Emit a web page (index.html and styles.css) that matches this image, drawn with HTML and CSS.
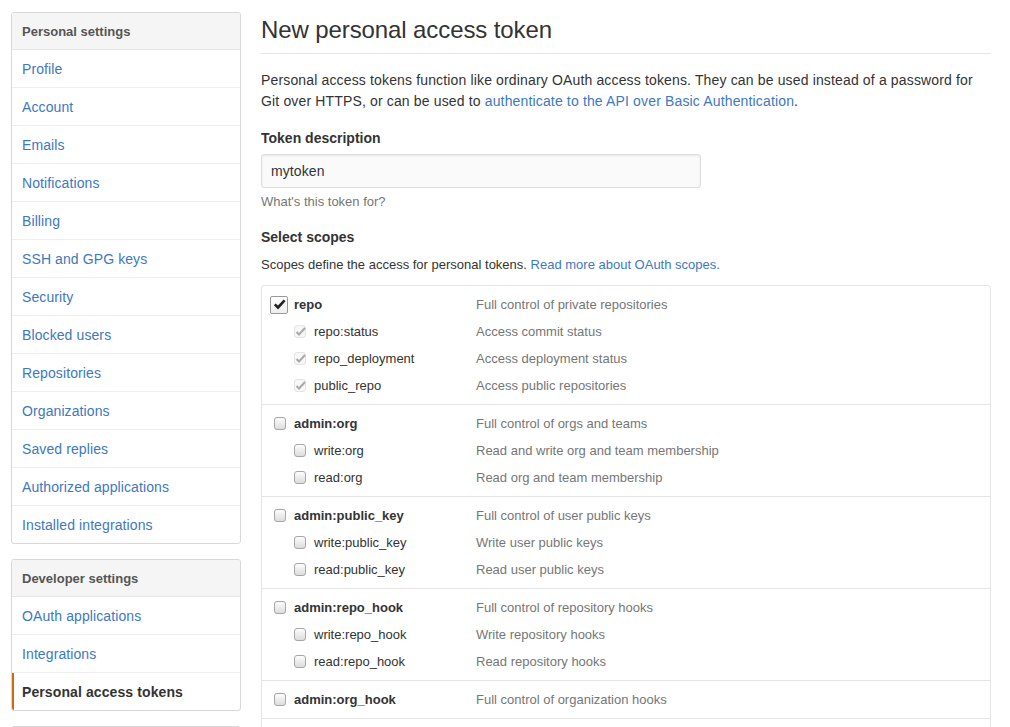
FILE: index.html
```html
<!DOCTYPE html>
<html>
<head>
<meta charset="utf-8">
<link rel="stylesheet" href="styles.css">
</head>
<body>
<div class="container">
  <aside class="sidebar">
    <nav class="menu">
      <div class="menu-heading">Personal settings</div>
      <a class="menu-item" href="#">Profile</a>
      <a class="menu-item" href="#">Account</a>
      <a class="menu-item" href="#">Emails</a>
      <a class="menu-item" href="#">Notifications</a>
      <a class="menu-item" href="#">Billing</a>
      <a class="menu-item" href="#">SSH and GPG keys</a>
      <a class="menu-item" href="#">Security</a>
      <a class="menu-item" href="#">Blocked users</a>
      <a class="menu-item" href="#">Repositories</a>
      <a class="menu-item" href="#">Organizations</a>
      <a class="menu-item" href="#">Saved replies</a>
      <a class="menu-item" href="#">Authorized applications</a>
      <a class="menu-item" href="#">Installed integrations</a>
    </nav>
    <nav class="menu">
      <div class="menu-heading">Developer settings</div>
      <a class="menu-item" href="#">OAuth applications</a>
      <a class="menu-item" href="#">Integrations</a>
      <a class="menu-item selected" href="#">Personal access tokens</a>
    </nav>
    <nav class="menu">
      <div class="menu-heading">&nbsp;</div>
    </nav>
  </aside>
  <main class="main">
    <h2 class="title">New personal access token</h2>
    <p class="intro">Personal access tokens function like ordinary OAuth access tokens. They can be used instead of a password for Git over HTTPS, or can be used to <a href="#">authenticate to the API over Basic Authentication</a>.</p>
    <div class="form-group">
      <label class="label">Token description</label>
      <div class="input">mytoken</div>
      <p class="note">What's this token for?</p>
    </div>
    <div class="form-group form-group-last">
      <label class="label">Select scopes</label>
      <p class="scopes-desc">Scopes define the access for personal tokens. <a href="#">Read more about OAuth scopes.</a></p>
    </div>
    <div class="scopes">
      <div class="scope-group">
        <div class="scope-row">
          <div class="scope-name top"><span class="cb cb-checked"><svg width="15" height="15" viewBox="0 0 15 15"><path d="M2.8 7.3 L6 10.5 L12.6 3.3" fill="none" stroke="#222" stroke-width="2.6"/></svg></span><b>repo</b></div>
          <div class="scope-desc">Full control of private repositories</div>
        </div>
        <div class="scope-row">
          <div class="scope-name sub"><span class="cb cb-dis"><svg width="13" height="12" viewBox="0 0 13 12"><path d="M2.5 6 L5 8.5 L11 2" fill="none" stroke="#a9a9a9" stroke-width="2"/></svg></span>repo:status</div>
          <div class="scope-desc">Access commit status</div>
        </div>
        <div class="scope-row">
          <div class="scope-name sub"><span class="cb cb-dis"><svg width="13" height="12" viewBox="0 0 13 12"><path d="M2.5 6 L5 8.5 L11 2" fill="none" stroke="#a9a9a9" stroke-width="2"/></svg></span>repo_deployment</div>
          <div class="scope-desc">Access deployment status</div>
        </div>
        <div class="scope-row">
          <div class="scope-name sub"><span class="cb cb-dis"><svg width="13" height="12" viewBox="0 0 13 12"><path d="M2.5 6 L5 8.5 L11 2" fill="none" stroke="#a9a9a9" stroke-width="2"/></svg></span>public_repo</div>
          <div class="scope-desc">Access public repositories</div>
        </div>
      </div>
      <div class="scope-group">
        <div class="scope-row">
          <div class="scope-name top"><span class="cb"></span><b>admin:org</b></div>
          <div class="scope-desc">Full control of orgs and teams</div>
        </div>
        <div class="scope-row">
          <div class="scope-name sub"><span class="cb"></span>write:org</div>
          <div class="scope-desc">Read and write org and team membership</div>
        </div>
        <div class="scope-row">
          <div class="scope-name sub"><span class="cb"></span>read:org</div>
          <div class="scope-desc">Read org and team membership</div>
        </div>
      </div>
      <div class="scope-group">
        <div class="scope-row">
          <div class="scope-name top"><span class="cb"></span><b>admin:public_key</b></div>
          <div class="scope-desc">Full control of user public keys</div>
        </div>
        <div class="scope-row">
          <div class="scope-name sub"><span class="cb"></span>write:public_key</div>
          <div class="scope-desc">Write user public keys</div>
        </div>
        <div class="scope-row">
          <div class="scope-name sub"><span class="cb"></span>read:public_key</div>
          <div class="scope-desc">Read user public keys</div>
        </div>
      </div>
      <div class="scope-group">
        <div class="scope-row">
          <div class="scope-name top"><span class="cb"></span><b>admin:repo_hook</b></div>
          <div class="scope-desc">Full control of repository hooks</div>
        </div>
        <div class="scope-row">
          <div class="scope-name sub"><span class="cb"></span>write:repo_hook</div>
          <div class="scope-desc">Write repository hooks</div>
        </div>
        <div class="scope-row">
          <div class="scope-name sub"><span class="cb"></span>read:repo_hook</div>
          <div class="scope-desc">Read repository hooks</div>
        </div>
      </div>
      <div class="scope-group">
        <div class="scope-row">
          <div class="scope-name top"><span class="cb"></span><b>admin:org_hook</b></div>
          <div class="scope-desc">Full control of organization hooks</div>
        </div>
      </div>
      <div class="scope-group">
        <div class="scope-row">
          <div class="scope-name top"><span class="cb"></span><b>gist</b></div>
          <div class="scope-desc">Create gists</div>
        </div>
      </div>
    </div>
  </main>
</div>
</body>
</html>
```
FILE: styles.css
```css
html, body {
  margin: 0;
  padding: 0;
  background: #fff;
  font-family: "Liberation Sans", Arial, sans-serif;
  font-size: 14px;
  line-height: 1.5;
  color: #333;
  overflow: hidden;
}
a { color: #4078c0; text-decoration: none; }

.container {
  display: flex;
  gap: 20px;
  padding: 12px 0 0 11px;
  width: 980px;
}

.sidebar {
  width: 230px;
  flex: none;
  display: flex;
  flex-direction: column;
  gap: 15px;
}
.menu {
  border: 1px solid #d8d8d8;
  border-radius: 3px;
  display: flex;
  flex-direction: column;
  overflow: hidden;
}
.menu-heading {
  background: #f5f5f5;
  border-bottom: 1px solid #e5e5e5;
  padding: 9px 10px 7px;
  font-size: 13px;
  line-height: 20px;
  font-weight: bold;
  color: #555;
}
.menu-item {
  display: block;
  padding: 9px 10px 7px;
  line-height: 21px;
  letter-spacing: 0.1px;
  border-bottom: 1px solid #eee;
}
.menu-item:last-child { border-bottom: 0; }
.menu-item.selected {
  color: #333;
  font-weight: bold;
  border-left: 2px solid #d26911;
  padding-left: 8px;
}

.main {
  width: 730px;
  flex: none;
}
.title {
  margin: 3px 0 0;
  padding-bottom: 8px;
  font-size: 24px;
  line-height: 30px;
  font-weight: normal;
  letter-spacing: -0.1px;
  border-bottom: 1px solid #e5e5e5;
}
.intro {
  margin: 16px 0 16px;
  line-height: 21px;
  letter-spacing: 0.15px;
}
.form-group { margin-bottom: 16px; }
.form-group-last { margin-bottom: 10px; }
.label {
  display: block;
  font-weight: bold;
  line-height: 21px;
}
.input {
  margin-top: 5px;
  height: 32px;
  box-sizing: content-box;
  border: 1px solid #ddd;
  border-radius: 3px;
  background: #fafafa;
  box-shadow: inset 0 1px 2px rgba(0,0,0,0.075);
  padding: 0 0 0 9px;
  width: 429px;
  line-height: 32px;
  font-size: 14px;
  letter-spacing: 0.1px;
}
.note {
  margin: 5px 0 0;
  font-size: 13px;
  line-height: 18px;
  color: #767676;
}
.scopes-desc {
  margin: 6px 0 0;
  font-size: 13px;
  line-height: 21px;
}

.scopes {
  border: 1px solid #e5e5e5;
  border-radius: 3px;
  font-size: 13px;
}
.scope-group {
  padding: 5px 9px 5px;
  border-bottom: 1px solid #e5e5e5;
}
.scope-row {
  display: flex;
  align-items: center;
  height: 27px;
}
.scope-name {
  width: 205px;
  flex: none;
  display: flex;
  align-items: center;
  color: #333;
}
.scope-name.sub { padding-left: 20px; width: 185px; }
.scope-desc { color: #767676; }

.cb {
  display: inline-block;
  flex: none;
  box-sizing: border-box;
  width: 12px;
  height: 13px;
  margin: 0 8px 0 3px;
  border: 1px solid #a6a6a6;
  border-radius: 3px;
  background: linear-gradient(#fdfdfd, #dcdcdc);
}
.cb-checked {
  width: 18px;
  height: 18px;
  margin: 0 6px 0 -1px;
  border: 1px solid #999;
  border-radius: 2px;
  background: linear-gradient(#fff, #eee);
  display: flex;
  align-items: center;
  justify-content: center;
}
.cb-dis {
  border: 1px solid #e4e4e4;
  background: #f7f7f7;
  display: flex;
  align-items: center;
  justify-content: center;
  overflow: visible;
}
.cb-dis svg { flex: none; }
```
